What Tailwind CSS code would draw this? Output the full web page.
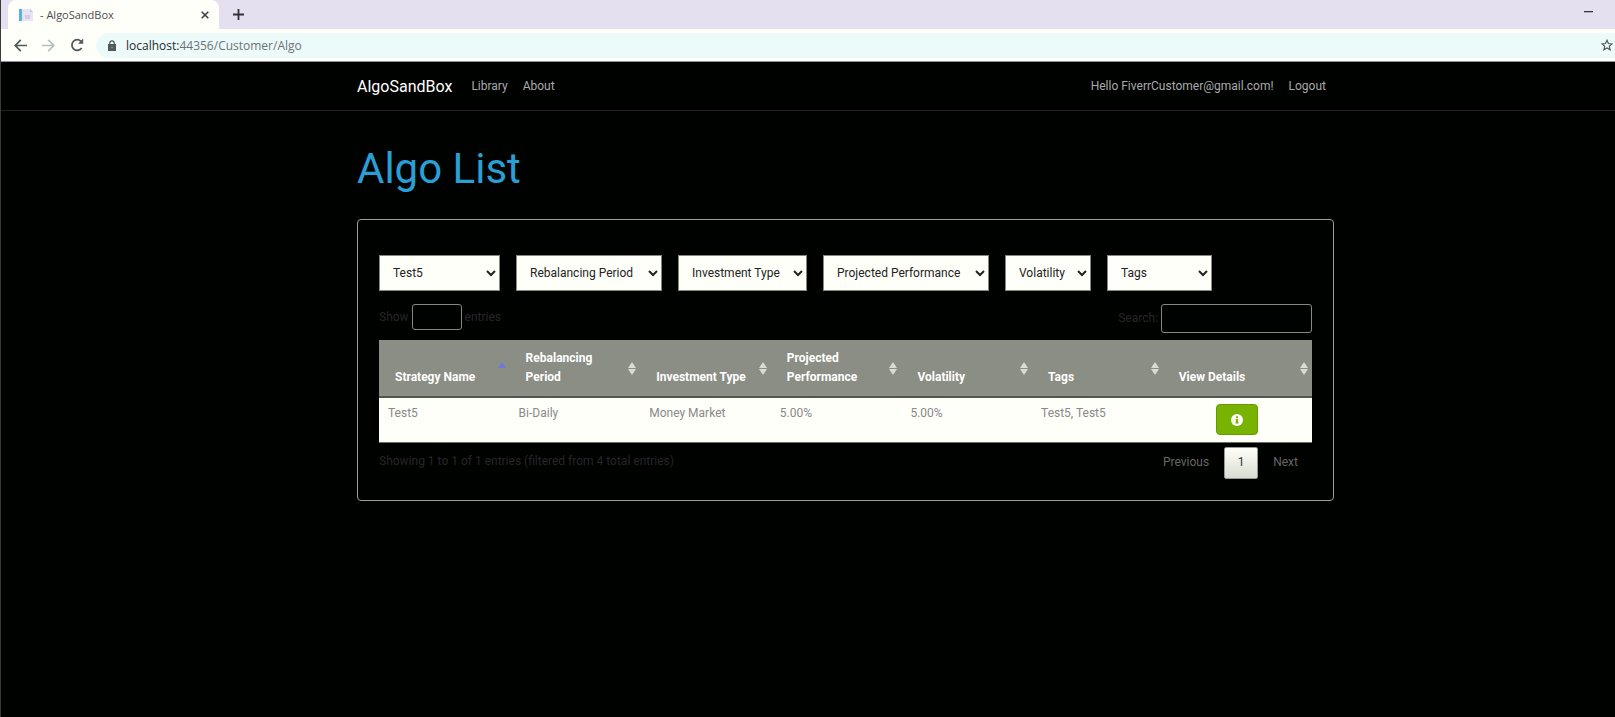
<!DOCTYPE html>
<html lang="en">
<head>
<meta charset="utf-8">
<meta name="viewport" content="width=device-width, initial-scale=1">
<title>Algo List - AlgoSandBox</title>
<script src="https://cdn.jsdelivr.net/npm/@tailwindcss/browser@4"></script>
</head>
<body class="min-h-screen overflow-x-hidden border-l border-[#3a3a3c] bg-[#000200] font-[Roboto,sans-serif] text-[12px] leading-[19px] text-[#888888]">

<!-- Browser window -->
<div class="font-['Open_Sans',sans-serif]">
  <div class="flex h-[29px] items-stretch bg-[#e5e0f0] pl-[7px]">
    <div class="flex w-[211px] items-center rounded-t-lg bg-[#fffffa] pr-[6px] pl-[11px]">
      <svg class="size-[14px] shrink-0" viewBox="0 0 14 14" aria-hidden="true"><path d="M4 1h7l3 3v9H4z" fill="#e9e4f2"/><path d="M11 1l3 3h-3z" fill="#c5c3d8"/><path d="M6 7h5v4H6z" fill="#d9cde6"/><path d="M0 1h3v12H0z" fill="#5fb0dc"/><path d="M3 1h2v12H3z" fill="#d5eaf5"/></svg>
      <span class="ml-[7px] flex-1 text-[11px] leading-[17px] text-[#4b4d52]">- AlgoSandBox</span>
      <button type="button" aria-label="Close tab" class="flex size-4 items-center justify-center"><svg class="size-[8px]" viewBox="0 0 8 8" fill="none" stroke="#3d4043" stroke-width="1.6"><path d="M.7.7l6.6 6.6M7.3.7L.7 7.3"/></svg></button>
    </div>
    <button type="button" aria-label="New tab" class="ml-[14px] flex items-center"><svg class="size-[11px]" viewBox="0 0 11 11" fill="none" stroke="#303336" stroke-width="1.8"><path d="M5.5 0v11M0 5.5h11"/></svg></button>
    <button type="button" aria-label="Minimize" class="mr-[22px] ml-auto flex h-6 items-center"><svg class="h-[2px] w-[9px]" viewBox="0 0 9 2"><path d="M0 0h9v1.3H0z" fill="#333338"/></svg></button>
  </div>
  <div class="flex h-[33px] items-center border-b border-[#8f8fa3] bg-[#fffffa]">
    <button type="button" aria-label="Back" class="ml-[13px]"><svg class="size-[13px]" viewBox="0 0 13 13" fill="none" stroke="#50595b" stroke-width="1.7"><path d="M13 6.500H1.300M6.800.8L1.200 6.500l5.600 5.700"/></svg></button>
    <button type="button" aria-label="Forward" class="ml-[15px]"><svg class="size-[13px]" viewBox="0 0 13 13" fill="none" stroke="#b3c0c0" stroke-width="1.7"><path d="M0 6.500h11.700M6.200.8l5.600 5.700-5.600 5.700"/></svg></button>
    <button type="button" aria-label="Reload" class="ml-[15px]"><svg class="size-[14px]" viewBox="0 0 14 14"><path d="M11.600 10A5.300 5.300 0 1 1 11 3.300l1 1" fill="none" stroke="#50595b" stroke-width="1.800"/><path d="M13.200.6v5.200H8z" fill="#50595b"/></svg></button>
    <div class="ml-[12px] flex h-[25px] flex-1 items-center rounded-l-full bg-[#edfafa] pr-[2px] pl-[12px]">
      <svg class="h-[11px] w-[8px]" viewBox="0 0 8 11"><path d="M0 4h8v7H0z" fill="#50595b"/><path d="M1.800 4.500V3a2.200 2.200 0 0 1 4.400 0v1.500" fill="none" stroke="#50595b" stroke-width="1.200"/><circle cx="4" cy="7.400" r="1" fill="#7d8888"/></svg>
      <span class="ml-[10px] flex-1 text-[12px] text-[#6b7377]"><span class="text-[#25292c]">localhost:</span>44356/Customer/Algo</span>
      <button type="button" aria-label="Bookmark"><svg class="size-[12px]" viewBox="0 0 24 24" fill="none" stroke="#50595b" stroke-width="2.400"><path d="M12 2.500l2.900 6.600 7.100.7-5.400 4.800 1.600 7L12 17.900l-6.200 3.700 1.600-7L2 9.800l7.100-.7z"/></svg></button>
    </div>
  </div>
</div>

<nav class="border-b border-[#1f2421] pl-[75px]">
  <div class="mx-auto flex h-[48px] max-w-[977px] items-center pr-2 text-[#a9aaac]">
    <a href="#" class="text-[16px] text-white">AlgoSandBox</a>
    <a href="#" class="ml-[19px]">Library</a>
    <a href="#" class="ml-[15px]">About</a>
    <a href="#" class="mr-[15px] ml-auto">Hello FiverrCustomer@gmail.com!</a>
    <a href="#">Logout</a>
  </div>
</nav>

<main class="pl-[75px]">
  <div class="mx-auto max-w-[977px] pt-[32px]">
    <h1 class="text-[42px] leading-[52px] text-[#2a9fd6]">Algo List</h1>

    <section class="mt-[24px] rounded-[4px] border border-[#9a9f9c] px-[21px] pt-[35px] pb-[21px]">
      <div class="flex gap-[16px] text-[#222222]">
        <select aria-label="Strategy" class="h-[36px] w-[121px] border border-[#85897b] bg-[#fffffa] pl-[9px]"><option>Test5</option></select>
        <select aria-label="Rebalancing Period" class="h-[36px] w-[146px] border border-[#85897b] bg-[#fffffa] pl-[9px]"><option>Rebalancing Period</option></select>
        <select aria-label="Investment Type" class="h-[36px] w-[129px] border border-[#85897b] bg-[#fffffa] pl-[9px]"><option>Investment Type</option></select>
        <select aria-label="Projected Performance" class="h-[36px] w-[166px] border border-[#85897b] bg-[#fffffa] pl-[9px]"><option>Projected Performance</option></select>
        <select aria-label="Volatility" class="h-[36px] w-[86px] border border-[#85897b] bg-[#fffffa] pl-[9px]"><option>Volatility</option></select>
        <select aria-label="Tags" class="h-[36px] w-[105px] border border-[#85897b] bg-[#fffffa] pl-[9px]"><option>Tags</option></select>
      </div>

      <div class="mt-[13px] flex items-start justify-between text-[#29242b]">
        <label class="flex items-center gap-[3px]">Show
          <select class="h-[26px] w-[50px] appearance-none rounded-[3px] border border-[#858b7c] bg-transparent"><option></option></select>
          entries</label>
        <label class="flex items-center gap-[3px]">Search:
          <input type="search" class="h-[29px] w-[151px] rounded-[3px] border border-[#858b7c] bg-transparent px-1 text-[#888888]">
        </label>
      </div>

      <table class="mt-[7px] w-full table-fixed border-collapse text-left">
        <colgroup><col class="w-[14%]"><col class="w-[14%]"><col class="w-[14%]"><col class="w-[14%]"><col class="w-[14%]"><col class="w-[14%]"><col></colgroup>
        <thead class="bg-[#8b8e84] align-bottom font-bold text-white">
          <tr class="h-[57px] border-b-2 border-[#55574f]">
            <th class="relative pb-[9px] pl-[16px]">Strategy Name<svg class="absolute top-[22px] right-[4px] h-[6px] w-[8px]" viewBox="0 0 8 6"><path d="M4 0l4 6H0z" fill="#7179d8"/></svg></th>
            <th class="relative pr-[24px] pb-[9px] pl-[16px]">Rebalancing Period<svg class="absolute top-[22px] right-[4px] h-[13px] w-[8px]" viewBox="0 0 8 13"><path d="M4 0l4 6H0zM0 7h8l-4 6z" fill="#d9dcd3"/></svg></th>
            <th class="relative pb-[9px] pl-[16px]">Investment Type<svg class="absolute top-[22px] right-[4px] h-[13px] w-[8px]" viewBox="0 0 8 13"><path d="M4 0l4 6H0zM0 7h8l-4 6z" fill="#d9dcd3"/></svg></th>
            <th class="relative pr-[24px] pb-[9px] pl-[16px]">Projected Performance<svg class="absolute top-[22px] right-[4px] h-[13px] w-[8px]" viewBox="0 0 8 13"><path d="M4 0l4 6H0zM0 7h8l-4 6z" fill="#d9dcd3"/></svg></th>
            <th class="relative pb-[9px] pl-[16px]">Volatility<svg class="absolute top-[22px] right-[4px] h-[13px] w-[8px]" viewBox="0 0 8 13"><path d="M4 0l4 6H0zM0 7h8l-4 6z" fill="#d9dcd3"/></svg></th>
            <th class="relative pb-[9px] pl-[16px]">Tags<svg class="absolute top-[22px] right-[4px] h-[13px] w-[8px]" viewBox="0 0 8 13"><path d="M4 0l4 6H0zM0 7h8l-4 6z" fill="#d9dcd3"/></svg></th>
            <th class="relative pb-[9px] pl-[16px]">View Details<svg class="absolute top-[22px] right-[4px] h-[13px] w-[8px]" viewBox="0 0 8 13"><path d="M4 0l4 6H0zM0 7h8l-4 6z" fill="#d9dcd3"/></svg></th>
          </tr>
        </thead>
        <tbody class="bg-[#fffffa] align-top text-[#888888]">
          <tr class="h-[45px] border-b border-[#6a6d60]">
            <td class="pt-[6px] pl-[9px]">Test5</td>
            <td class="pt-[6px] pl-[9px]">Bi-Daily</td>
            <td class="pt-[6px] pl-[9px]">Money Market</td>
            <td class="pt-[6px] pl-[9px]">5.00%</td>
            <td class="pt-[6px] pl-[9px]">5.00%</td>
            <td class="pt-[6px] pl-[9px]">Test5, Test5</td>
            <td class="pt-[6px]">
              <button type="button" aria-label="View details" class="mx-auto flex h-[31px] w-[42px] items-center justify-center rounded-[4px] border border-[#659a02] bg-[#77b300]"><svg class="size-[12px]" viewBox="0 0 12 12"><circle cx="6" cy="6" r="6" fill="#fffffa"/><path d="M5 2.300h2v1.700H5zM4.500 4.900H7v3.300h.6v1.200H4.500V8.200H5V6h-.5z" fill="#77b300"/></svg></button>
            </td>
          </tr>
        </tbody>
      </table>

      <div class="mt-[4px] flex items-start justify-between">
        <p class="pt-[5px] text-[#29242b]">Showing 1 to 1 of 1 entries (filtered from 4 total entries)</p>
        <div class="flex h-[32px] items-center pr-[14px] text-[#666666]">
          <button type="button">Previous</button>
          <button type="button" class="mx-[15px] h-[32px] w-[34px] rounded-[2px] border border-[#979797] bg-linear-to-b from-[#fffffa] to-[#d9dcd2] text-[#333333]">1</button>
          <button type="button">Next</button>
        </div>
      </div>
    </section>
  </div>
</main>
</body>
</html>
